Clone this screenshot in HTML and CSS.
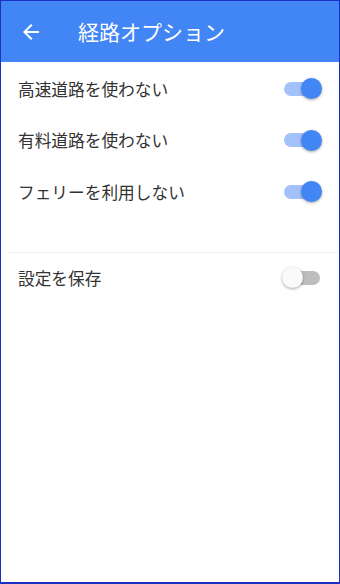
FILE: index.html
```html
<!DOCTYPE html>
<html lang="ja">
<head>
<meta charset="utf-8">
<link rel="stylesheet" href="styles.css">
</head>
<body>
<div class="screen">
  <header class="bar">
    <svg class="back" width="24" height="24" viewBox="0 0 24 24"><path d="M20 11H7.83l5.59-5.59L12 4l-8 8 8 8 1.41-1.41L7.83 13H20v-2z" fill="#fff"/></svg>
    <h1 class="title">経路オプション</h1>
  </header>
  <div class="list top">
    <div class="row"><span class="label">高速道路を使わない</span><span class="toggle on"><span class="thumb"></span></span></div>
    <div class="row"><span class="label">有料道路を使わない</span><span class="toggle on"><span class="thumb"></span></span></div>
    <div class="row"><span class="label">フェリーを利用しない</span><span class="toggle on"><span class="thumb"></span></span></div>
  </div>
  <div class="divider"></div>
  <div class="list">
    <div class="row last"><span class="label">設定を保存</span><span class="toggle"><span class="thumb"></span></span></div>
  </div>
</div>
</body>
</html>
```
FILE: styles.css
```css
html, body { margin: 0; padding: 0; }
body { font-family: "Noto Sans CJK JP", "Noto Sans", sans-serif; background: #fff; }
.screen {
  box-sizing: border-box;
  width: 340px;
  height: 584px;
  border: 1px solid #1a30c4;
  border-bottom-width: 2px;
  background: #fff;
  display: flex;
  flex-direction: column;
}
.bar {
  height: 61px;
  background: #4285f4;
  display: flex;
  align-items: center;
  flex-shrink: 0;
}
.back { margin-left: 18px; width: 24px; height: 24px; }
.title {
  margin: 0 0 0 35px;
  font-size: 21px;
  font-weight: 400;
  color: #fff;
  line-height: 1;
}
.list { display: flex; flex-direction: column; }
.list.top { padding-top: 1px; }
.row {
  height: 51.5px;
  display: flex;
  align-items: center;
  justify-content: space-between;
  padding: 0 17px 0 17px;
}
.row.last { height: 49px; }
.label { font-size: 16.7px; color: #333; }
.toggle {
  position: relative;
  width: 36px;
  height: 14px;
  border-radius: 7px;
  background: #bdbdbd;
  margin-right: 2px;
}
.toggle .thumb {
  position: absolute;
  top: -3.5px;
  left: -2px;
  width: 21px;
  height: 21px;
  border-radius: 50%;
  background: #fafafa;
  box-shadow: 0 1px 3px rgba(0,0,0,0.35);
}
.toggle.on { background: #a3c2f9; }
.toggle.on .thumb { left: auto; right: -2px; background: #4285f4; }
.divider {
  height: 1px;
  background: #eeeeee;
  margin: 34.5px 0 0 8px;
}
```
